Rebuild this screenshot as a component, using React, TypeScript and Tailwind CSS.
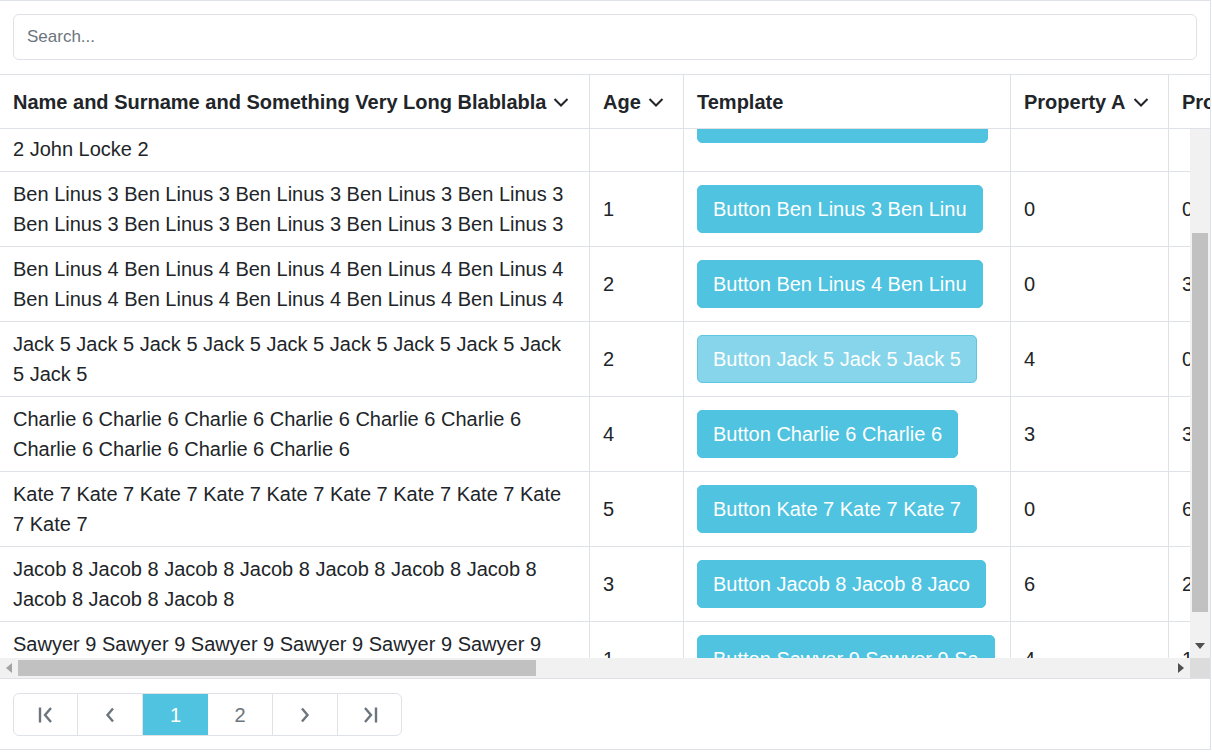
import React from "react";

type Row = {
  lines?: string[];
  name: string;
  age: string;
  a: string;
  b: string;
  light?: boolean;
};

const rep = (s: string) => Array(10).fill(s).join(" ");

const rows: Row[] = [
  {
    lines: [
      "John Locke 2 John Locke 2 John Locke 2 John Locke",
      "2 John Locke 2 John Locke 2 John Locke 2 John Locke",
      "2 John Locke 2",
    ],
    name: rep("John Locke 2"),
    age: "3",
    a: "1",
    b: "2",
  },
  { name: rep("Ben Linus 3"), age: "1", a: "0", b: "0" },
  { name: rep("Ben Linus 4"), age: "2", a: "0", b: "3" },
  { name: rep("Jack 5"), age: "2", a: "4", b: "0", light: true },
  { name: rep("Charlie 6"), age: "4", a: "3", b: "3" },
  { name: rep("Kate 7"), age: "5", a: "0", b: "6" },
  { name: rep("Jacob 8"), age: "3", a: "6", b: "2" },
  { name: rep("Sawyer 9"), age: "1", a: "4", b: "1" },
];

const Chevron = () => (
  <svg width="16" height="10" viewBox="0 0 16 10" className="ml-[7px] shrink-0">
    <polyline points="1.5,2 8,8.5 14.5,2" fill="none" stroke="#212529" strokeWidth="2" />
  </svg>
);

const W = ["w-[590px]", "w-[94px]", "w-[327px]", "w-[158px]", "w-[160px]"];

function FirstIcon() {
  return (
    <svg width="18" height="18" viewBox="0 0 18 18">
      <line x1="3" y1="1.5" x2="3" y2="16.5" stroke="#6c757d" strokeWidth="2.4" />
      <polyline points="14,2 8,9 14,16" fill="none" stroke="#6c757d" strokeWidth="2.4" />
    </svg>
  );
}
function LastIcon() {
  return (
    <svg width="18" height="18" viewBox="0 0 18 18">
      <line x1="15" y1="1.5" x2="15" y2="16.5" stroke="#6c757d" strokeWidth="2.4" />
      <polyline points="4,2 10,9 4,16" fill="none" stroke="#6c757d" strokeWidth="2.4" />
    </svg>
  );
}
function PrevIcon() {
  return (
    <svg width="18" height="18" viewBox="0 0 18 18">
      <polyline points="12,2.5 6.5,9 12,15.5" fill="none" stroke="#6c757d" strokeWidth="2.4" />
    </svg>
  );
}
function NextIcon() {
  return (
    <svg width="18" height="18" viewBox="0 0 18 18">
      <polyline points="6,2.5 11.5,9 6,15.5" fill="none" stroke="#6c757d" strokeWidth="2.4" />
    </svg>
  );
}

export default function App() {
  return (
    <div className="w-[1211px] h-[750px] border border-l-0 border-[#dee2e6] flex flex-col overflow-hidden bg-white text-[#212529] font-['Liberation_Sans',Arial,sans-serif]">
      {/* search */}
      <div className="px-[13px] pt-[13px] pb-[14px] shrink-0">
        <input
          placeholder="Search..."
          className="w-full h-[46px] border border-[#dee2e6] rounded-[6px] px-[13px] text-[17px] outline-none placeholder:text-[#6c757d] font-['Liberation_Sans',Arial,sans-serif]"
        />
      </div>

      {/* header */}
      <div className="flex shrink-0 border-t border-b border-[#dee2e6] h-[55px] text-[20px] font-bold leading-[30px]">
        <div className={`${W[0]} shrink-0 border-r border-[#dee2e6] px-[13px] flex items-center whitespace-nowrap`}>
          Name and Surname and Something Very Long Blablabla
          <Chevron />
        </div>
        <div className={`${W[1]} shrink-0 border-r border-[#dee2e6] px-[13px] flex items-center`}>
          Age
          <Chevron />
        </div>
        <div className={`${W[2]} shrink-0 border-r border-[#dee2e6] px-[13px] flex items-center`}>
          Template
        </div>
        <div className={`${W[3]} shrink-0 border-r border-[#dee2e6] px-[13px] flex items-center whitespace-nowrap`}>
          Property A
          <Chevron />
        </div>
        <div className={`${W[4]} shrink-0 px-[13px] flex items-center whitespace-nowrap`}>
          Property B
          <Chevron />
        </div>
      </div>

      {/* body */}
      <div className="flex h-[529px] shrink-0">
        <div className="flex-1 overflow-hidden">
          <div className="mt-[-62px] text-[20px] leading-[30px]">
            {rows.map((r, i) => {
              const label = "Button " + r.name.slice(0, 20);
              return (
                <div
                  key={i}
                  className={`flex border-b border-[#dee2e6] ${r.lines ? "h-[105px]" : "h-[75px]"}`}
                >
                  <div className={`${W[0]} shrink-0 border-r border-[#dee2e6] px-[13px] py-[7px] flex items-center`}>
                    {r.lines ? (
                      <div>
                        {r.lines.map((l, j) => (
                          <span key={j} className="block whitespace-nowrap">
                            {l}
                          </span>
                        ))}
                      </div>
                    ) : (
                      <div>{r.name}</div>
                    )}
                  </div>
                  <div className={`${W[1]} shrink-0 border-r border-[#dee2e6] px-[13px] flex items-center`}>
                    {r.age}
                  </div>
                  <div className={`${W[2]} shrink-0 border-r border-[#dee2e6] px-[13px] flex items-center`}>
                    <button
                      className={`h-[48px] px-[15px] py-[8px] rounded-[5px] border text-white whitespace-nowrap text-[20px] leading-[30px] ${
                        r.light
                          ? "bg-[#86d5ea] border-[#5fc6e0]"
                          : "bg-[#4fc3df] border-[#4fc3df]"
                      }`}
                    >
                      {label}
                    </button>
                  </div>
                  <div className={`${W[3]} shrink-0 border-r border-[#dee2e6] px-[13px] flex items-center`}>
                    {r.a}
                  </div>
                  <div className={`${W[4]} shrink-0 px-[13px] flex items-center`}>{r.b}</div>
                </div>
              );
            })}
          </div>
        </div>
        {/* vertical scrollbar */}
        <div className="w-[20px] shrink-0 bg-[#f1f1f1] flex flex-col items-center">
          <div className="h-[104px] shrink-0" />
          <div className="w-[16px] h-[379px] bg-[#c1c1c1] shrink-0" />
          <div className="flex-1 flex items-end justify-center pb-[9px]">
            <svg width="10" height="6" viewBox="0 0 10 6">
              <polygon points="0,0 10,0 5,6" fill="#505050" />
            </svg>
          </div>
        </div>
      </div>

      {/* horizontal scrollbar */}
      <div className="flex h-[21px] shrink-0 border-b border-[#dee2e6]">
        <div className="flex-1 bg-[#f1f1f1] flex items-center">
          <div className="w-[18px] flex justify-center shrink-0">
            <svg width="6" height="10" viewBox="0 0 6 10">
              <polygon points="6,0 6,10 0,5" fill="#a3a3a3" />
            </svg>
          </div>
          <div className="w-[518px] h-[16px] bg-[#c1c1c1] shrink-0" />
          <div className="flex-1" />
          <div className="w-[18px] flex justify-center shrink-0">
            <svg width="6" height="10" viewBox="0 0 6 10">
              <polygon points="0,0 6,5 0,10" fill="#505050" />
            </svg>
          </div>
        </div>
        <div className="w-[20px] bg-[#dcdcdc] shrink-0" />
      </div>

      {/* pagination */}
      <div className="px-[13px] pt-[14px] flex">
        <div className="flex border border-[#dee2e6] rounded-[6px] overflow-hidden h-[43px] text-[20px] text-[#6c757d]">
          <div className="w-[64px] flex items-center justify-center border-r border-[#dee2e6]">
            <FirstIcon />
          </div>
          <div className="w-[65px] flex items-center justify-center border-r border-[#dee2e6]">
            <PrevIcon />
          </div>
          <div className="w-[65px] flex items-center justify-center bg-[#4fc3df] text-white">1</div>
          <div className="w-[65px] flex items-center justify-center border-r border-[#dee2e6]">2</div>
          <div className="w-[65px] flex items-center justify-center border-r border-[#dee2e6]">
            <NextIcon />
          </div>
          <div className="w-[63px] flex items-center justify-center">
            <LastIcon />
          </div>
        </div>
      </div>
    </div>
  );
}
